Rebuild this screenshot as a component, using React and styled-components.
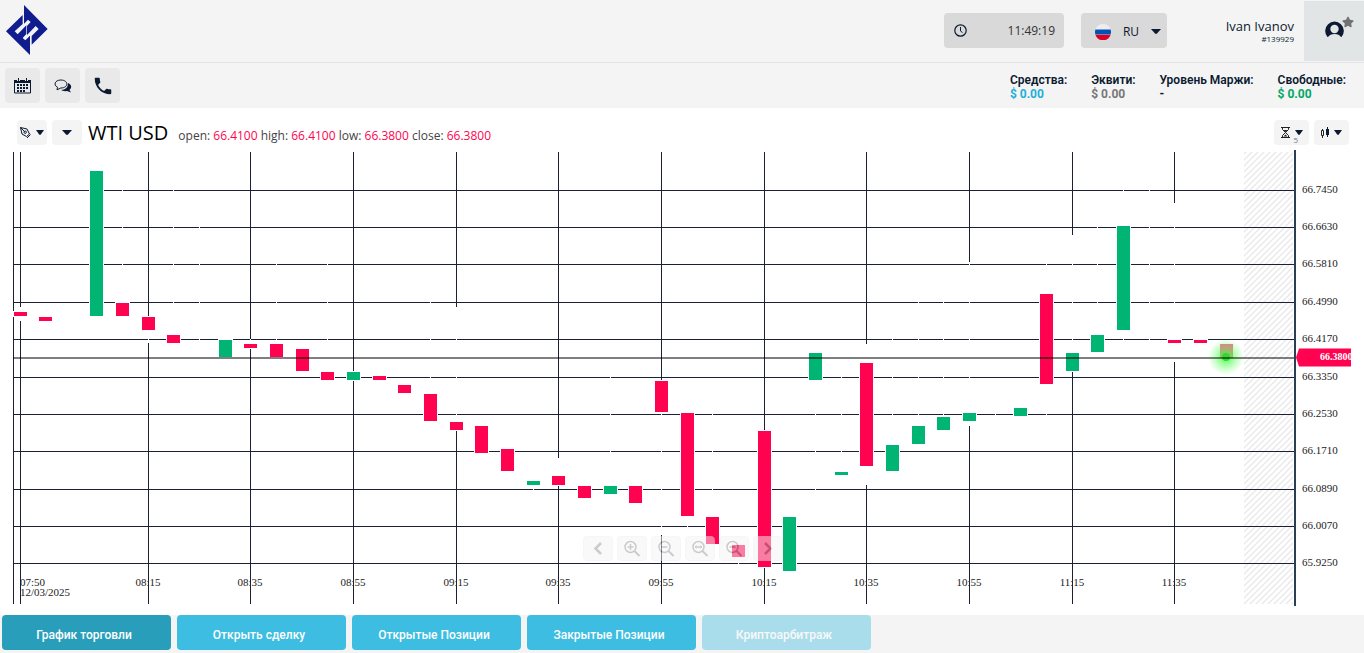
import React, {useLayoutEffect, useRef, useState} from 'react';
import styled, {createGlobalStyle, css} from 'styled-components';
import {FaStar} from 'react-icons/fa';
import {MdPhone} from 'react-icons/md';

const GlobalStyle = createGlobalStyle`
  * {
    box-sizing: border-box;
  }

  body {
    margin: 0;
    background: #fff;
    color: #0b1a30;
    font-family: "Open Sans", "Noto Sans", sans-serif;
    font-size: 12px;
  }

  button {
    font-family: inherit;
    border: 0;
    padding: 0;
    cursor: pointer;
    color: inherit;
  }
`;

const Page = styled.div`
  display: flex;
  flex-direction: column;
  min-height: 100vh;
`;

const Header = styled.header`
  display: flex;
  align-items: flex-start;
  justify-content: space-between;
  height: 63px;
  padding-left: 6px;
  background: #f4f4f4;
  border-bottom: 1px solid #e2e4e6;
`;

const LogoLink = styled.a`
  display: block;
  padding-top: 5px;
`;

const HeaderRight = styled.div`
  display: flex;
  align-items: center;
  height: 61px;
`;

const headerBox = css`
  display: flex;
  align-items: center;
  justify-content: space-between;
  height: 35px;
  border-radius: 4px;
  background: #d9d9d9;
`;

const Clock = styled.div`
  ${headerBox};
  width: 120px;
  padding: 0 9px 0 10px;
  margin-right: 17px;
  color: #333;
`;

const Language = styled.button`
  ${headerBox};
  width: 86px;
  padding: 2px 6px 0 14px;
  font-size: 12px;
`;

const User = styled.div`
  width: 137px;
  padding-right: 10px;
  text-align: right;
`;

const UserName = styled.div`
  font-size: 13px;
  line-height: 16px;
`;

const UserId = styled.div`
  font-size: 8px;
  line-height: 10px;
`;

const Profile = styled.button`
  position: relative;
  display: flex;
  align-items: center;
  justify-content: center;
  align-self: flex-end;
  width: 60px;
  height: 60px;
  padding-bottom: 4px;
  background: #e1e5e6;
`;

const Star = styled(FaStar)`
  position: absolute;
  top: 15px;
  right: 10px;
  color: #717171;
`;

const Toolbar = styled.div`
  display: flex;
  justify-content: space-between;
  height: 45px;
  padding: 5px 18px 5px 5px;
  background: #f4f4f4;
`;

const Group = styled.div`
  display: flex;
  gap: ${props => props.$gap || 5}px;
`;

const ToolButton = styled.button`
  display: flex;
  align-items: center;
  justify-content: center;
  width: 35px;
  height: 35px;
  border-radius: 4px;
  background: #e9e9e9;
`;

const Stat = styled.div`
  padding-top: 5px;
  font-family: Roboto, sans-serif;
  font-weight: 600;
  line-height: 14px;
  white-space: nowrap;
`;

const StatValue = styled.div`
  color: ${props => props.$color || 'inherit'};
  font-weight: 700;
`;

const ChartHead = styled.div`
  display: flex;
  align-items: center;
  height: 42px;
  padding: 12px 15px 5px 17px;
`;

const MenuButton = styled.button`
  position: relative;
  display: flex;
  align-items: center;
  justify-content: center;
  gap: 5px;
  width: ${props => props.$wide ? 35 : 30}px;
  height: 25px;
  border-radius: 4px;
  background: #f4f4f4;
`;

const Period = styled.span`
  position: absolute;
  right: 11px;
  bottom: 1px;
  font-size: 8px;
  line-height: 8px;
  color: #777;
`;

const Symbol = styled.h1`
  margin: 0 10px 0 6px;
  font-size: 20px;
  font-weight: 400;
  line-height: 24px;
  color: #000;
`;

const Quote = styled.div`
  flex: 1;
  padding-top: 5px;
  color: #444;

  b {
    font-weight: 400;
    color: #ff0350;
  }
`;

const ChartArea = styled.div`
  position: relative;
  flex: 1;
  height: 465px;
`;

const ChartSvg = styled.svg`
  display: block;
  width: 100%;
  height: 456px;
  font-family: "Liberation Serif", serif;
  font-size: 11px;
`;

const ZoomBar = styled.div`
  position: absolute;
  top: 386px;
  left: 0;
  right: 0;
  display: flex;
  justify-content: center;
  gap: 4px;
  padding-left: 2px;
`;

const ZoomButton = styled.button`
  width: 30px;
  height: 25px;
  border: 1px solid #eee;
  border-radius: 4px;
  background: #f4f4f4;
  opacity: 0.5;
`;

const Tabs = styled.nav`
  display: flex;
  gap: 6px;
  height: 38px;
  padding: 0 2px;
  background: #f4f4f4;
`;

const Tab = styled.button`
  width: 169px;
  height: 35px;
  padding: 4px 5px 0 0;
  border-radius: 4px;
  background: ${props => props.$active ? '#289ebb' : '#3cbde1'};
  color: #fff;
  font-family: Roboto, sans-serif;
  font-size: 12px;
  font-weight: 500;

  &:disabled {
    opacity: 0.4;
  }
`;

const GRID = '#1b2035';
const RED = '#ff0350';
const GREEN = '#00b573';
const TOP = 150;
const BODY = 13;

const prices = [
    ['66.7450', 190], ['66.6630', 227], ['66.5810', 264], ['66.4990', 302],
    ['66.4170', 339], ['66.3350', 377], ['66.2530', 414], ['66.1710', 451],
    ['66.0890', 489], ['66.0070', 526], ['65.9250', 563],
];

const times = [
    [5, '08:15'], [9, '08:35'], [13, '08:55'], [17, '09:15'], [21, '09:35'], [25, '09:55'],
    [29, '10:15'], [33, '10:35'], [37, '10:55'], [41, '11:15'], [45, '11:35'],
];

// slot, body top, body bottom, wick top, wick bottom, rising
const candles = [
    [0, 312, 316, 307, 321], [1, 317, 321], [3, 171, 316, 171, 316, true],
    [4, 303, 316, 185, 316], [5, 317, 330, 317, 343], [6, 335, 343, 185, 343],
    [7, 0, 0, 215, 345], [8, 340, 357, 340, 357, true], [9, 344, 348, 339, 348],
    [10, 344, 357, 255, 357], [11, 349, 371], [12, 372, 380, 255, 380],
    [13, 372, 380, 372, 380, true], [14, 376, 380], [15, 385, 393],
    [16, 394, 421, 295, 421], [17, 422, 430, 307, 430], [18, 426, 453], [19, 449, 471],
    [20, 481, 485, 481, 492, true], [21, 476, 485, 458, 485], [22, 486, 498],
    [23, 486, 494, 370, 494, true], [24, 486, 503], [25, 381, 412, 381, 535],
    [26, 413, 516, 413, 530], [27, 517, 544, 405, 544], [28, 545, 557, 545, 567],
    [29, 431, 567], [30, 517, 571, 517, 571, true], [31, 353, 380, 353, 493, true],
    [32, 472, 475, 370, 475, true], [33, 363, 466, 344, 485], [34, 445, 471, 335, 471, true],
    [35, 426, 444, 297, 444, true], [36, 417, 430, 297, 430, true],
    [37, 413, 421, 262, 426, true], [38, 0, 0, 405, 420], [39, 408, 416, 408, 416, true],
    [40, 294, 384, 260, 418], [41, 353, 371, 235, 371, true], [42, 335, 352, 220, 352, true],
    [43, 226, 330, 185, 345, true], [44, 0, 0, 185, 345], [45, 340, 343, 203, 362],
    [46, 340, 343],
];

function Caret(props) {
    return (
        <svg width={props.size || 8} height="5" viewBox="0 0 10 5" preserveAspectRatio="none">
            <path d="M0 0h10L6 4.6q-1 .7-2 0z" fill="#0b1a30"/>
        </svg>
    )
}

function Logo() {
    return (
        <svg width="42" height="50" viewBox="18 15 126 150" fill="#0f1d8f">
            <path d="M72 15l71 72-48 47v-26l21-21-9-9-26 27V78l11-12-8-7-12 12z"/>
            <path d="M90 165L18 94l50-49v27L44 94l9 9 26-27v26l-11 12 8 7 14-14z"/>
        </svg>
    );
}

function CalendarIcon() {
    return (
        <svg width="17" height="17" viewBox="0 0 17 17" fill="none" stroke="#0b1a30">
            <path d="M.5 3.5h16V16H.5z"/>
            <path d="M0 4.5h17" strokeWidth="3"/>
            <path d="M4.5 0v4M12.5 0v4" stroke="#e9e9e9" strokeWidth="3"/>
            <path d="M4.5 1v3M12.5 1v3"/>
            <path d="M3 8h12M3 11h12M3 14h8" strokeWidth="2" strokeDasharray="2 1"/>
        </svg>
    );
}

function ChatIcon() {
    return (
        <svg width="18" height="14" viewBox="0 0 18 14">
            <path d="M14 4q4 2 3 5l-1.500 2 1.500 2.500-4-1.500q-4 .5-6-1 7 0 7-7z" fill="#0b1a30"/>
            <path
                d="M6.800 1c8 0 8 8 0 8L3 10.800l.5-2.600C-1 6 1 1 6.800 1z"
                fill="#e9e9e9"
                stroke="#0b1a30"
            />
        </svg>
    );
}

function PenIcon() {
    return (
        <svg width="11" height="12" viewBox="0 0 11 12" fill="none" stroke="#0b1a30">
            <path d="M.5.5 7 2l2.500 5L6.500 9.500 2 7zM.5.5l4 4M7 11l3.500-3.500"/>
            <circle cx="5.200" cy="5.200" r="1.200"/>
        </svg>
    );
}

function HourglassIcon() {
    return (
        <svg width="9" height="11" viewBox="0 0 9 11" fill="none" stroke="#222">
            <path d="M0 .5h9M0 10.500h9M1.500.5v2l3 3 3-3v-2M1.500 10.500v-2l3-3 3 3v2"/>
            <path d="M2.500 3h4l-2 2zM2.500 9.500l2-2 2 2z" fill="#222" stroke="none"/>
        </svg>
    );
}

function CandlesIcon() {
    return (
        <svg width="8" height="11" viewBox="0 0 8 11">
            <path d="M.5 3.500h2v5h-2zM1.500 2v1.500M1.500 8.500V11" fill="none" stroke="#222"/>
            <path d="M5 2h3v6H5zM6 0h1v10H6z" fill="#0b1a30"/>
        </svg>
    );
}

function ZoomIcon({type}) {
    if (type === 'left' || type === 'right') {
        return (
            <svg width="28" height="23" viewBox="0 0 28 23" fill="none" stroke="#999" strokeWidth="2.500">
                <path d={type === 'left' ? 'M17 6l-5.500 5.500L17 17' : 'M11 6l5.500 5.500L11 17'}/>
            </svg>
        );
    }
    return (
        <svg width="28" height="23" viewBox="0 0 28 23" fill="none" stroke="#999" strokeWidth="1.500">
            <circle cx="12.500" cy="10" r="5.500"/>
            <path d="M16.500 14l5 5" strokeWidth="2"/>
            <path d="M9.500 10h6"/>
            {type === 'in' && <path d="M12.500 7v6"/>}
            {type === 'fit' && <path d="M10.500 8.500 9 10l1.500 1.500M14.500 8.500 16 10l-1.500 1.500" strokeWidth="1"/>}
        </svg>
    );
}

function Chart() {
    const area = useRef(null);
    const [width, setWidth] = useState(window.innerWidth);

    useLayoutEffect(() => {
        const observer = new ResizeObserver(() => setWidth(area.current.clientWidth));
        observer.observe(area.current);
        return () => observer.disconnect();
    }, []);

    const axis = width - 70;
    const step = (axis - 88) / 47;
    const x = slot => Math.floor(20 + slot * step);
    const last = x(47);

    return (
        <ChartArea ref={area}>
            <ChartSvg>
                <defs>
                    <pattern id="hatch" width="6" height="6" patternUnits="userSpaceOnUse">
                        <path d="M-1 7 7-1M-1 1l2-2M5 7l2-2" stroke="#eaeaea" strokeWidth="1.500"/>
                    </pattern>
                    <radialGradient id="glow">
                        <stop offset="0.2" stopColor="#4f4" stopOpacity="0.75"/>
                        <stop offset="0.6" stopColor="#5f5" stopOpacity="0.35"/>
                        <stop offset="1" stopColor="#5f5" stopOpacity="0"/>
                    </radialGradient>
                </defs>
                <g transform={`translate(0 ${-TOP})`}>
                    <rect x={axis - 50} y="152" width="49" height="452" fill="url(#hatch)"/>
                    <g fill={GRID}>
                        <rect x="13" y="152" width="1" height="452"/>
                        <rect x={x(0)} y="152" width="1" height="452"/>
                        {times.map(([slot]) => <rect key={slot} x={x(slot)} y="152" width="1" height="452"/>)}
                        {prices.map(([label, y]) => <rect key={label} x="13" y={y} width={axis - 13} height="1"/>)}
                    </g>
                    {candles.map(([slot, top, bottom, high, low, up]) => (
                        <g key={slot}>
                            {high && <rect x={x(slot)} y={high} width="1" height={low - high} fill="#fff"/>}
                            {top > 0 && (
                                <rect
                                    x={x(slot) - 6.5}
                                    y={top - 0.5}
                                    width={BODY + 1}
                                    height={bottom - top + 1}
                                    fill={up ? GREEN : RED}
                                    stroke="#fff"
                                />
                            )}
                        </g>
                    ))}
                    <rect x={last - 6} y="344" width={BODY} height="14" fill={RED} opacity="0.6"/>
                    <circle cx={last} cy="357" r="18" fill="url(#glow)"/>
                    <circle cx={last} cy="357" r="4" fill="#33d633"/>
                    <rect x="13" y="357" width={axis - 13} height="2" opacity="0.5"/>
                    <rect x={axis} y="150" width="2" height="456" fill="#2c3e55"/>
                    <g fill="#222">
                        {prices.map(([label, y]) => <text key={label} x={axis + 8} y={y + 3}>{label}</text>)}
                        <text x="20" y="586">07:50</text>
                        <text x="20" y="596">12/03/2025</text>
                        {times.map(([slot, label]) => (
                            <text key={slot} x={x(slot)} y="586" textAnchor="middle">{label}</text>
                        ))}
                    </g>
                    <path d={`M${axis + 2} 357.500l3-9h52v18h-52z`} fill={RED}/>
                    <svg x={axis + 5} y="345" width="52" height="25">
                        <text x="21" y="15" fill="#fff" fontSize="10" fontWeight="700">66.3800</text>
                    </svg>
                </g>
            </ChartSvg>
            <ZoomBar>
                {['left', 'in', 'out', 'fit', 'reset', 'right'].map(type => (
                    <ZoomButton key={type} aria-label={type}><ZoomIcon type={type}/></ZoomButton>
                ))}
            </ZoomBar>
        </ChartArea>
    );
}

function App() {
    return (
        <Page>
            <GlobalStyle/>
            <Header>
                <LogoLink href="/" aria-label="Home"><Logo/></LogoLink>
                <HeaderRight>
                    <Clock>
                        <svg width="13" height="13" viewBox="0 0 13 13" fill="none" stroke="#0b1a30">
                            <circle cx="6.500" cy="6.500" r="5.700" strokeWidth="1.200"/>
                            <path d="M6.500 3v4l2 1.500"/>
                        </svg>
                        <span>11:49:19</span>
                    </Clock>
                    <Language>
                        <svg width="16" height="16" viewBox="0 0 16 16">
                            <circle cx="8" cy="8" r="8" fill="#eee"/>
                            <path d="M.4 5.500h15.200q.8 2.500 0 5H.4q-.8-2.500 0-5z" fill="#0052b4"/>
                            <path d="M.4 10.700h15.200a8 8 0 0 1-15.200 0z" fill="#d80027"/>
                        </svg>
                        <span>RU</span>
                        <Caret size={10}/>
                    </Language>
                    <User>
                        <UserName>Ivan Ivanov</UserName>
                        <UserId>#139929</UserId>
                    </User>
                    <Profile aria-label="Profile">
                        <svg width="19" height="16" viewBox="0 0 19 16">
                            <path d="M2.500 16a9.300 9.300 0 1 1 14 0z" fill="#0b1a30"/>
                            <circle cx="9.500" cy="8" r="4.200" fill="#e1e5e6"/>
                            <path d="M3 16q2-3 6.500-3t6.500 3z" fill="#e1e5e6"/>
                        </svg>
                        <Star size={12}/>
                    </Profile>
                </HeaderRight>
            </Header>
            <Toolbar>
                <Group>
                    <ToolButton aria-label="Calendar"><CalendarIcon/></ToolButton>
                    <ToolButton aria-label="Chat"><ChatIcon/></ToolButton>
                    <ToolButton aria-label="Phone"><MdPhone size={22}/></ToolButton>
                </Group>
                <Group $gap={24}>
                    <Stat>Средства:<StatValue $color="#1fb0d8">$ 0.00</StatValue></Stat>
                    <Stat>Эквити:<StatValue $color="#777">$ 0.00</StatValue></Stat>
                    <Stat>Уровень Маржи:<StatValue>-</StatValue></Stat>
                    <Stat>Свободные:<StatValue $color="#00a866">$ 0.00</StatValue></Stat>
                </Group>
            </Toolbar>
            <ChartHead>
                <Group>
                    <MenuButton aria-label="Drawing tools"><PenIcon/><Caret/></MenuButton>
                    <MenuButton aria-label="Symbols"><Caret size={10}/></MenuButton>
                </Group>
                <Symbol>WTI USD</Symbol>
                <Quote>
                    open: <b>66.4100</b> high: <b>66.4100</b> low: <b>66.3800</b> close: <b>66.3800</b>
                </Quote>
                <Group>
                    <MenuButton $wide aria-label="Period"><HourglassIcon/><Caret/><Period>5</Period></MenuButton>
                    <MenuButton $wide aria-label="Chart type"><CandlesIcon/><Caret/></MenuButton>
                </Group>
            </ChartHead>
            <Chart/>
            <Tabs>
                <Tab $active>График торговли</Tab>
                <Tab>Открыть сделку</Tab>
                <Tab>Открытые Позиции</Tab>
                <Tab>Закрытые Позиции</Tab>
                <Tab disabled>Криптоарбитраж</Tab>
            </Tabs>
        </Page>
    );
}

export default App;
